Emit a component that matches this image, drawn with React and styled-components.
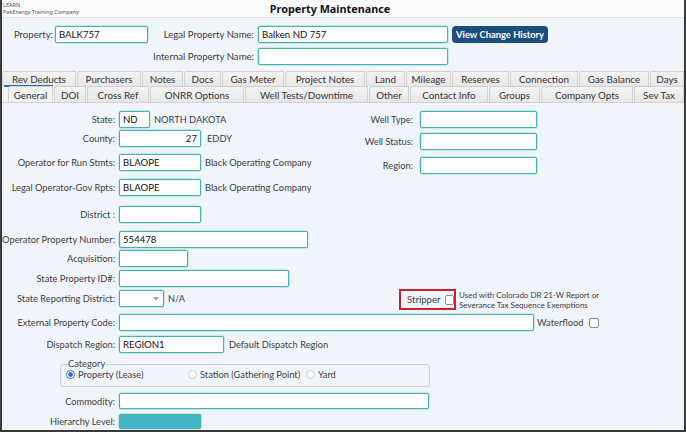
import React from "react";
import styled, { createGlobalStyle } from "styled-components";

const GlobalStyle = createGlobalStyle`
  html, body {
    margin: 0;
    padding: 0;
  }
  body {
    font-family: Lato, "Noto Sans", sans-serif;
    background: #f0f5fb;
  }
`;

const Window = styled.div`
  width: 686px;
  height: 432px;
  box-sizing: border-box;
  border: 2px solid #3a3a3a;
  border-top: none;
  background: #f0f5fb;
  display: flex;
  flex-direction: column;
  overflow: hidden;
  color: #3d3d3d;
  font-size: 9.3px;
`;

const TitleBar = styled.div`
  height: 18px;
  box-sizing: border-box;
  display: grid;
  grid-template-columns: 1fr auto 1fr;
  align-items: center;
  background: #fafcfe;
  border-bottom: 1px solid #e6e0e3;
`;

const Company = styled.div`
  padding-left: 1px;
  font-family: "Noto Sans", sans-serif;
  font-size: 5.5px;
  line-height: 7px;
  color: #555;
`;

const Title = styled.div`
  margin-right: 26px;
  font-family: "Noto Sans", sans-serif;
  font-size: 10.8px;
  font-weight: 700;
  color: #111;
`;

const Header = styled.div`
  display: grid;
  grid-template-columns: 53px 93px 110px 190px auto;
  grid-auto-rows: 17px;
  row-gap: 5px;
  align-items: center;
  padding-top: 8px;
  font-size: 9.6px;
`;

const Label = styled.label`
  width: ${(p) => (p.$w ? `${p.$w}px` : "auto")};
  grid-column: ${(p) => p.$col || "auto"};
  box-sizing: border-box;
  padding-right: ${(p) => (p.$pr !== undefined ? p.$pr : 4)}px;
  text-align: right;
  white-space: nowrap;
  color: #3d3d3d;
`;

const Field = styled.input`
  width: ${(p) => p.$w}px;
  height: ${(p) => p.$h || 17}px;
  box-sizing: border-box;
  margin: 0;
  padding: 0 3px;
  border: 1px solid #45b1b1;
  box-shadow: 0 0 0 0.5px #9bdada;
  border-radius: 2px;
  background: ${(p) => p.$fill || "#fff"};
  font-family: inherit;
  font-size: 9.6px;
  color: #111;
  text-align: ${(p) => (p.$right ? "right" : "left")};
  outline: none;
`;

const HistoryButton = styled.button`
  margin-left: 4px;
  height: 17px;
  padding: 0 4px;
  border: none;
  border-radius: 4px;
  background: #1c4d80;
  color: #fff;
  font-family: inherit;
  font-size: 9.4px;
  font-weight: 700;
  white-space: nowrap;
  justify-self: start;
`;

const TabStrip = styled.div`
  margin-top: 6px;
  display: flex;
  flex-direction: column;
`;

const TabRow = styled.div`
  display: flex;
  gap: 1px;
  height: ${(p) => p.$h}px;
  padding-left: ${(p) => p.$pl || 0}px;
  border-bottom: ${(p) => (p.$line ? "1px solid #d2d2d2" : "none")};
`;

const Tab = styled.div`
  position: relative;
  width: ${(p) => p.$w}px;
  flex: none;
  box-sizing: border-box;
  border: 1px solid #d0d0d0;
  border-bottom: none;
  border-top-left-radius: 3px;
  background: ${(p) =>
    p.$active ? "#f2f2f2" : "linear-gradient(#f3f3f3, #e7e7e7)"};
  display: flex;
  align-items: center;
  justify-content: center;
  font-size: 9.8px;
  color: #333;
  white-space: nowrap;

  &::after {
    content: "";
    display: ${(p) => (p.$focus ? "block" : "none")};
    position: absolute;
    left: 1px;
    bottom: -1px;
    width: 49px;
    height: 2px;
    background: #2f6db3;
  }
`;

const Body = styled.div`
  flex: 1;
  display: flex;
  flex-direction: column;
`;

const TopSection = styled.div`
  display: flex;
  align-items: stretch;
`;

const LeftCol = styled.div`
  width: 341px;
  display: flex;
  flex-direction: column;
`;

const RightCol = styled.div`
  flex: 1;
  display: flex;
  flex-direction: column;
`;

const Row = styled.div`
  display: flex;
  align-items: center;
  height: ${(p) => p.$h || 17}px;
  margin-top: ${(p) => p.$mt || 0}px;
`;

const Note = styled.span`
  margin-left: ${(p) => p.$ml || 4}px;
  white-space: nowrap;
  color: #3d3d3d;
`;

const SelectBox = styled.div`
  width: 45px;
  height: 17px;
  box-sizing: border-box;
  border: 1px solid #45b1b1;
  box-shadow: 0 0 0 0.5px #9bdada;
  border-radius: 2px;
  background: #fff;
  display: flex;
  align-items: center;
  justify-content: flex-end;
  padding-right: 4px;

  &::after {
    content: "";
    border-left: 3.5px solid transparent;
    border-right: 3.5px solid transparent;
    border-top: 4px solid #a9a9a9;
  }
`;

const StripperRow = styled.div`
  margin-top: auto;
  margin-bottom: -3px;
  margin-left: 56px;
  display: flex;
  align-items: center;
`;

const StripperBox = styled.div`
  width: 57px;
  height: 21px;
  box-sizing: border-box;
  border: 2px solid #c8232c;
  display: flex;
  align-items: center;
  padding-left: 6px;
  gap: 4px;
  font-size: 9.6px;
`;

const Check = styled.span`
  display: inline-block;
  width: 10px;
  height: 10px;
  box-sizing: border-box;
  border: 1px solid #8a8a8a;
  border-radius: 2px;
  background: #fff;
  margin-left: ${(p) => p.$ml || 0}px;
`;

const SmallNote = styled.div`
  margin-left: 3px;
  font-size: 8px;
  line-height: 10px;
  color: #3d3d3d;
  white-space: nowrap;
`;

const Category = styled.fieldset`
  margin: 6px 0 0 58px;
  width: 370px;
  height: 28px;
  box-sizing: border-box;
  padding: 0 0 1px 5px;
  border: 1px solid #d3d3d3;
  border-radius: 3px;
  display: flex;
  align-items: center;
`;

const Legend = styled.legend`
  padding: 0 1px;
  margin-left: 1px;
  font-size: 9.3px;
  line-height: 10px;
  color: #444;
`;

const RadioItem = styled.label`
  width: ${(p) => (p.$w ? `${p.$w}px` : "auto")};
  display: flex;
  align-items: center;
  gap: 3px;
  white-space: nowrap;
  color: #3d3d3d;
`;

const Radio = styled.span`
  width: 9px;
  height: 9px;
  box-sizing: border-box;
  border-radius: 50%;
  border: 1px solid ${(p) => (p.$on ? "#3a78c9" : "#c9c9c9")};
  background: ${(p) =>
    p.$on ? "radial-gradient(circle, #2f6fc4 0 2px, #fff 2.5px)" : "#fff"};
`;

const leftLabelW = 117;

const topTabs = [
  ["Rev Deducts", 74],
  ["Purchasers", 64],
  ["Notes", 41],
  ["Docs", 37],
  ["Gas Meter", 62],
  ["Project Notes", 80],
  ["Land", 39],
  ["Mileage", 45],
  ["Reserves", 57],
  ["Connection", 68],
  ["Gas Balance", 70],
  ["Days", 34],
];

const bottomTabs = [
  ["General", 45],
  ["DOI", 32],
  ["Cross Ref", 62],
  ["ONRR Options", 94],
  ["Well Tests/Downtime", 123],
  ["Other", 40],
  ["Contact Info", 78],
  ["Groups", 51],
  ["Company Opts", 92],
  ["Sev Tax", 50],
];

const LeftField = ({ label, mt, w, value, right, children, fill, h }) => (
  <Row $mt={mt} $h={h}>
    <Label $w={leftLabelW}>{label}</Label>
    <Field $w={w} $h={h} $right={right} $fill={fill} readOnly defaultValue={value || ""} />
    {children}
  </Row>
);

const RightField = ({ label, mt }) => (
  <Row $mt={mt}>
    <Label $w={77} $pr={7}>{label}</Label>
    <Field $w={117} readOnly defaultValue="" />
  </Row>
);

export default function App() {
  return (
    <Window>
      <GlobalStyle />
      <TitleBar>
        <Company>
          <div>LEARN</div>
          <div>PakEnergy Training Company</div>
        </Company>
        <Title>Property Maintenance</Title>
        <div />
      </TitleBar>

      <Header>
        <Label $pr={2}>Property:</Label>
        <Field $w={93} readOnly defaultValue="BALK757" />
        <Label>Legal Property Name:</Label>
        <Field $w={190} readOnly defaultValue="Balken ND 757" />
        <HistoryButton>View Change History</HistoryButton>
        <Label $col={3}>Internal Property Name:</Label>
        <Field $w={190} readOnly defaultValue="" />
      </Header>

      <TabStrip>
        <TabRow $h={15}>
          {topTabs.map(([name, w], i) => (
            <Tab key={name} $w={w} $focus={i === 0}>
              {name}
            </Tab>
          ))}
        </TabRow>
        <TabRow $h={16} $pl={6} $line>
          {bottomTabs.map(([name, w], i) => (
            <Tab key={name} $w={w} $active={i === 0}>
              {name}
            </Tab>
          ))}
        </TabRow>
      </TabStrip>

      <Body>
        <TopSection>
          <LeftCol>
            <LeftField label="State:" mt={8} w={31} value="ND">
              <Note>NORTH DAKOTA</Note>
            </LeftField>
            <LeftField label="County:" mt={2} w={82} value="27" right>
              <Note $ml={6}>EDDY</Note>
            </LeftField>
            <LeftField label="Operator for Run Stmts:" mt={7} w={82} value="BLAOPE">
              <Note>Black Operating Company</Note>
            </LeftField>
            <LeftField label="Legal Operator-Gov Rpts:" mt={8} w={82} value="BLAOPE">
              <Note>Black Operating Company</Note>
            </LeftField>
            <LeftField label="District :" mt={10} w={82} />
            <LeftField label="Operator Property Number:" mt={8} w={189} value="554478" />
            <LeftField label="Acquisition:" mt={2} w={69} />
            <LeftField label="State Property ID#:" mt={3} w={170} />
            <Row $mt={3}>
              <Label $w={leftLabelW}>State Reporting District:</Label>
              <SelectBox />
              <Note>N/A</Note>
            </Row>
          </LeftCol>

          <RightCol>
            <RightField label="Well Type:" mt={8} />
            <RightField label="Well Status:" mt={5} />
            <RightField label="Region:" mt={7} />
            <StripperRow>
              <StripperBox>
                <span>Stripper</span>
                <Check />
              </StripperBox>
              <SmallNote>
                <div>Used with Colorado DR 21-W Report or</div>
                <div>Severance Tax Sequence Exemptions</div>
              </SmallNote>
            </StripperRow>
          </RightCol>
        </TopSection>

        <LeftField label="External Property Code:" mt={7} w={415}>
          <Note $ml={3}>Waterflood</Note>
          <Check $ml={5} />
        </LeftField>
        <LeftField label="Dispatch Region:" mt={5} w={105} value="REGION1">
          <Note $ml={5}>Default Dispatch Region</Note>
        </LeftField>

        <Category>
          <Legend>Category</Legend>
          <RadioItem $w={122}>
            <Radio $on />
            Property (Lease)
          </RadioItem>
          <RadioItem $w={118}>
            <Radio />
            Station (Gathering Point)
          </RadioItem>
          <RadioItem>
            <Radio />
            Yard
          </RadioItem>
        </Category>

        <LeftField label="Commodity:" mt={6} w={310} h={16} />
        <LeftField label="Hierarchy Level:" mt={5} w={82} h={15} fill="#41b8c3" />
      </Body>
    </Window>
  );
}
